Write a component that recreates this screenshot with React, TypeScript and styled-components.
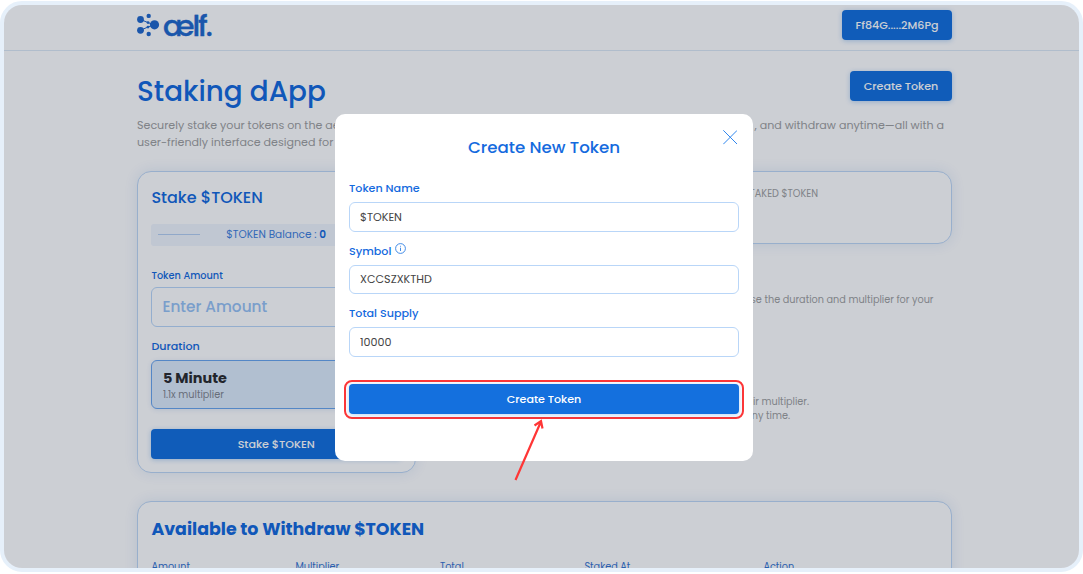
import React from 'react';
import styled, { createGlobalStyle } from 'styled-components';

const blue = '#146ade';
const line = '#b9d6f8';

const GlobalStyle = createGlobalStyle`
  * { box-sizing: border-box; }
  html, body { margin: 0; background: #fff; overflow: hidden; }
  body { font-family: Poppins, 'Liberation Sans', sans-serif; font-size: 11.1px; color: #333; }
  h1, h2, p { margin: 0; }
  button, input { font-family: inherit; }
`;

const Screen = styled.div`
  width: 1083px;
  height: 574px;
  padding: 1px 0 2px;
`;

const Frame = styled.div`
  position: relative;
  height: 571px;
  border: 4px solid #e6f0fa;
  border-radius: 22px;
  overflow: hidden;
  background: #fff;
`;

const Header = styled.header`
  height: 46px;
  border-bottom: 1px solid #dce9f5;
`;

const Container = styled.div`
  width: 815px;
  margin-left: 133px;
`;

const HeaderRow = styled(Container)`
  display: flex;
  justify-content: space-between;
  height: 45px;
  padding-top: 5px;
`;

const Brand = styled.div`
  display: flex;
  align-items: flex-start;
  color: #2168cc;

  svg { margin-top: 3px; flex: none; }
`;

const BrandName = styled.span`
  margin-left: 3px;
  font-size: 29px;
  font-weight: 500;
  line-height: 33px;
  letter-spacing: -2px;
  -webkit-text-stroke: 0.4px currentColor;
`;

const Button = styled.button<{ $w?: string }>`
  display: block;
  width: ${(p) => p.$w ?? '100%'};
  height: 30px;
  flex: none;
  padding: 0;
  border: 0;
  border-radius: 4px;
  background: #1470de;
  color: #fff;
  font-size: 11.1px;
  font-weight: 500;
  line-height: 30px;
  box-shadow: 0 1px 5px rgba(20, 112, 222, 0.3);
`;

const TitleRow = styled.div`
  display: flex;
  justify-content: space-between;
  align-items: flex-start;
  height: 66px;
  padding-top: 20px;
`;

const Title = styled.h1`
  font-size: 27.8px;
  font-weight: 500;
  line-height: 42px;
  color: ${blue};
`;

const Muted = styled.p<{ $size?: number; $lh?: number }>`
  font-size: ${(p) => p.$size ?? 9.7}px;
  line-height: ${(p) => p.$lh ?? 14.5}px;
  color: #a0a0a0;
  white-space: nowrap;
`;

const IntroLine = styled(Muted)`
  display: flex;
  justify-content: space-between;
  padding-right: 8px;
`;

const Columns = styled.div`
  display: flex;
  gap: 14px;
  margin-top: 21px;
  height: 330px;
  align-items: flex-start;
`;

const Card = styled.section`
  border: 1px solid #bfd7f5;
  border-radius: 14px;
  background: #fff;
  box-shadow: 0 0 14px rgba(20, 80, 190, 0.11);
`;

const StakeCard = styled(Card)`
  width: 278.5px;
  height: 302px;
  padding: 13px 13.4px;
`;

const CardTitle = styled.h2`
  font-size: 16px;
  font-weight: 500;
  line-height: 26px;
  color: ${blue};
`;

const Balance = styled.div`
  display: flex;
  align-items: center;
  justify-content: space-between;
  height: 22px;
  margin-top: 13px;
  padding: 0 7px;
  border-radius: 3px;
  background: #f0f5fd;
  font-size: 10.5px;
  line-height: 20px;
  color: #3f80dc;

  &::before, &::after {
    content: '';
    width: 42px;
    border-top: 1px solid #b5cff2;
  }

  b { color: ${blue}; font-weight: 600; }
`;

const FieldLabel = styled.div<{ $size?: number; $top: number }>`
  margin-top: ${(p) => p.$top}px;
  font-size: ${(p) => p.$size ?? 11.15}px;
  font-weight: 500;
  line-height: 16px;
  color: ${blue};
`;

const AmountInput = styled.input`
  display: block;
  width: 100%;
  height: 40px;
  margin-top: 3px;
  padding: 0 10px;
  border: 1px solid ${line};
  border-radius: 6px;
  background: #fff;
  font-size: 15.3px;
  font-weight: 500;

  &::placeholder { color: #98c2f4; opacity: 1; }
`;

const DurationOption = styled.div`
  height: 48.5px;
  margin-top: 6.5px;
  padding: 7px 10.5px;
  border: 1px solid #6aa5ee;
  border-radius: 6px;
  background: #deebfb;
  box-shadow: 0 1px 5px rgba(20, 80, 190, 0.12);
  color: #2b2b2e;
  font-size: 9.7px;

  strong {
    display: block;
    font-size: 14.4px;
    font-weight: 700;
    line-height: 20px;
  }

  span { color: #82868e; display: block; line-height: 13px; }
`;

const StakeButton = styled(Button)`
  margin-top: 20.5px;
`;

const Info = styled.div`
  flex: 1;
`;

const TotalCard = styled(Card)`
  height: 73px;
  padding: 15px 133px 0 14px;
  text-align: right;
`;

const Notes = styled.div<{ $top: number; $right: number }>`
  margin-top: ${(p) => p.$top}px;
  padding-right: ${(p) => p.$right}px;
  text-align: right;
`;

const WithdrawCard = styled(Card)`
  height: 120px;
  padding: 14.2px 13.4px;
`;

const WithdrawTitle = styled.h2`
  font-size: 17.4px;
  font-weight: 700;
  line-height: 26px;
  color: ${blue};
`;

const TableHead = styled.div`
  display: grid;
  grid-template-columns: 144px 144.5px 144.5px 179px 1fr;
  margin-top: 18px;
  font-size: 9.7px;
  line-height: 14px;
  color: #3474d2;
`;

const Overlay = styled.div`
  position: absolute;
  inset: 0;
  background: rgba(0, 15, 40, 0.2);
`;

const Modal = styled.div`
  position: absolute;
  left: 331px;
  top: 109px;
  width: 418px;
  height: 347px;
  padding: 21px 14px 0;
  border-radius: 10px;
  background: #fff;
`;

const ModalTitle = styled.h2`
  font-size: 16.65px;
  font-weight: 500;
  line-height: 26px;
  text-align: center;
  color: ${blue};
`;

const CloseIcon = styled.svg`
  position: absolute;
  right: 16px;
  top: 16px;
`;

const ModalInput = styled.input`
  display: block;
  width: 390px;
  height: 29.5px;
  margin-top: 6px;
  padding: 1px 10px 0;
  border: 1px solid ${line};
  border-radius: 6px;
  color: #444;
  font-size: 11.15px;
`;

const InfoIcon = styled.svg`
  margin-left: 3.5px;
  vertical-align: 0.5px;
`;

const Highlight = styled.div`
  width: 400px;
  margin: 23px 0 0 -5px;
  padding: 2px 3px 3px;
  border: 2px solid #ff3636;
  border-radius: 8px;
`;

const Arrow = styled.svg`
  position: absolute;
  left: 175px;
  top: 303px;
  overflow: visible;
`;

export default function App() {
  return (
    <>
      <GlobalStyle />
      <Screen>
        <Frame>
          <Header>
            <HeaderRow>
              <Brand>
                <svg width="23" height="24" viewBox="0 0 23 24" fill="currentColor" stroke="currentColor">
                  <path d="M3.6 6.5 L11 9.6 L17 11.8 L11 14 L3.6 17.2" fill="none" strokeWidth="1" />
                  <g stroke="none">
                    <circle cx="3.5" cy="6.5" r="3.4" />
                    <circle cx="3.5" cy="17.3" r="3.4" />
                    <circle cx="17.5" cy="11.8" r="4.6" />
                    <circle cx="11.7" cy="2.9" r="2.2" />
                    <circle cx="11.7" cy="21" r="2.2" />
                    <circle cx="11" cy="9.6" r="1.4" />
                    <circle cx="11" cy="14.1" r="1.4" />
                  </g>
                </svg>
                <BrandName>ælf.</BrandName>
              </Brand>
              <Button $w="110px">Ff84G.....2M6Pg</Button>
            </HeaderRow>
          </Header>
          <Container>
            <TitleRow>
              <Title>Staking dApp</Title>
              <Button $w="102px">Create Token</Button>
            </TitleRow>
            <IntroLine $size={11.1} $lh={16.5}>
              <span>Securely stake your tokens on the aelf blockchain</span>
              <span>, and withdraw anytime—all with a</span>
            </IntroLine>
            <Muted $size={11.1} $lh={16}>user-friendly interface designed for everyone.</Muted>
            <Columns>
              <StakeCard>
                <CardTitle>Stake $TOKEN</CardTitle>
                <Balance>
                  <span>$TOKEN Balance : <b>0</b></span>
                </Balance>
                <FieldLabel $top={22} $size={9.75}>Token Amount</FieldLabel>
                <AmountInput placeholder="Enter Amount" />
                <FieldLabel $top={11}>Duration</FieldLabel>
                <DurationOption>
                  <strong>5 Minute</strong>
                  <span>1.1x multiplier</span>
                </DurationOption>
                <StakeButton>Stake $TOKEN</StakeButton>
              </StakeCard>
              <Info>
                <TotalCard>
                  <Muted>TOTAL STAKED $TOKEN</Muted>
                </TotalCard>
                <Notes $top={49} $right={18.5}>
                  <Muted>Choose the duration and multiplier for your</Muted>
                </Notes>
                <Notes $top={87.5} $right={143}>
                  <Muted>Rewards follow their multiplier.</Muted>
                </Notes>
                <Notes $top={0} $right={162}>
                  <Muted>Withdraw at any time.</Muted>
                </Notes>
              </Info>
            </Columns>
            <WithdrawCard>
              <WithdrawTitle>Available to Withdraw $TOKEN</WithdrawTitle>
              <TableHead>
                <span>Amount</span>
                <span>Multiplier</span>
                <span>Total</span>
                <span>Staked At</span>
                <span>Action</span>
              </TableHead>
            </WithdrawCard>
          </Container>
          <Overlay />
          <Modal>
            <ModalTitle>Create New Token</ModalTitle>
            <CloseIcon width="14.5" height="14.5" viewBox="0 0 14.5 14.5" stroke="#2f86ee" strokeWidth="1">
              <path d="M0.3 0.3 L14.2 14.2 M14.2 0.3 L0.3 14.2" />
            </CloseIcon>
            <FieldLabel $top={19}>Token Name</FieldLabel>
            <ModalInput defaultValue="$TOKEN" />
            <FieldLabel $top={11}>
              Symbol
              <InfoIcon width="11" height="11" viewBox="0 0 11 11" fill="none" stroke="#2f80e4" strokeWidth="0.9">
                <circle cx="5.5" cy="5.5" r="4.9" />
                <path d="M5.5 4.7 V8 M5.5 2.8 V3.7" />
              </InfoIcon>
            </FieldLabel>
            <ModalInput defaultValue="XCCSZXKTHD" />
            <FieldLabel $top={11}>Total Supply</FieldLabel>
            <ModalInput defaultValue="10000" />
            <Highlight>
              <Button>Create Token</Button>
            </Highlight>
            <Arrow width="40" height="64" fill="none" stroke="#ff3636" strokeWidth="2.2">
              <path d="M5.5 63 L31 4.5 M24.5 8.5 L31 4 L32.5 11.5" />
            </Arrow>
          </Modal>
        </Frame>
      </Screen>
    </>
  );
}
